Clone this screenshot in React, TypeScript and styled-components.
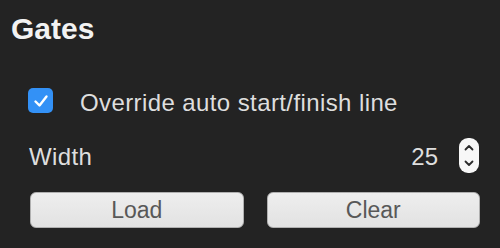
import styled, { createGlobalStyle } from "styled-components";

const GlobalStyle = createGlobalStyle`
  html, body {
    margin: 0;
    padding: 0;
    background: #232323;
  }
  body {
    font-family: "Liberation Sans", Arial, sans-serif;
  }
`;

const Panel = styled.div`
  width: 500px;
  height: 248px;
  box-sizing: border-box;
  padding: 10px 0 0 11px;
  background: #232323;
  display: flex;
  flex-direction: column;
  overflow: hidden;
`;

const Title = styled.h2`
  margin: 0;
  font-size: 30px;
  line-height: 37px;
  font-weight: bold;
  color: #f2f2f2;
`;

const CheckRow = styled.label`
  display: flex;
  align-items: flex-start;
  gap: 27px;
  margin: 41px 0 0 17px;
  height: 25px;
`;

const Box = styled.span<{ checked: boolean }>`
  width: 25px;
  height: 25px;
  border-radius: 5px;
  box-sizing: border-box;
  background: ${(p) => (p.checked ? "#3391f6" : "#f5f5f5")};
  display: flex;
  align-items: center;
  justify-content: center;
  flex-shrink: 0;
`;

const Label = styled.span<{ $shift?: number }>`
  font-size: 24px;
  line-height: 25px;
  letter-spacing: 0.4px;
  margin-top: ${(p) => p.$shift ?? 0}px;
  color: #dedede;
  white-space: nowrap;
`;

const FieldRow = styled.div`
  display: flex;
  align-items: flex-start;
  margin: 25px 21px 0 18px;
  height: 35px;
`;

const Spacer = styled.div`
  flex: 1;
`;

const Value = styled.span`
  font-size: 24px;
  line-height: 35px;
  margin-top: 1px;
  color: #dedede;
  margin-right: 21px;
`;

const Stepper = styled.div`
  width: 20px;
  height: 35px;
  border-radius: 9px;
  background: #f7f7f7;
  display: flex;
  align-items: center;
  justify-content: center;
`;

const ButtonRow = styled.div`
  display: flex;
  gap: 23px;
  margin: 19px 20px 0 19px;
`;

const Button = styled.button`
  flex: 1;
  height: 36px;
  border: 1px solid #b0b0b0;
  border-radius: 6px;
  background: linear-gradient(#eeeeee, #e2e2e2);
  color: #585858;
  font-family: "Liberation Sans", Arial, sans-serif;
  font-size: 23px;
  padding: 0;
  line-height: 34px;
`;

export default function App() {
  return (
    <>
      <GlobalStyle />
      <Panel>
        <Title>Gates</Title>
        <CheckRow>
          <Box checked>
            <svg width="16" height="14" viewBox="0 0 16 14">
              <path
                d="M2.5 7.5 L6.5 11.5 L13.5 2.5"
                fill="none"
                stroke="#ffffff"
                strokeWidth="2.4"
                strokeLinecap="round"
                strokeLinejoin="round"
              />
            </svg>
          </Box>
          <Label $shift={2}>Override auto start/finish line</Label>
        </CheckRow>
        <FieldRow>
          <Label $shift={6}>Width</Label>
          <Spacer />
          <Value>25</Value>
          <Stepper>
            <svg width="12" height="27" viewBox="0 0 12 27">
              <path
                d="M2.5 7.5 L6 4 L9.5 7.5"
                fill="none"
                stroke="#2a2a2a"
                strokeWidth="1.8"
                strokeLinecap="round"
                strokeLinejoin="round"
              />
              <path
                d="M2.5 19.5 L6 23 L9.5 19.5"
                fill="none"
                stroke="#2a2a2a"
                strokeWidth="1.8"
                strokeLinecap="round"
                strokeLinejoin="round"
              />
            </svg>
          </Stepper>
        </FieldRow>
        <ButtonRow>
          <Button>Load</Button>
          <Button>Clear</Button>
        </ButtonRow>
      </Panel>
    </>
  );
}
